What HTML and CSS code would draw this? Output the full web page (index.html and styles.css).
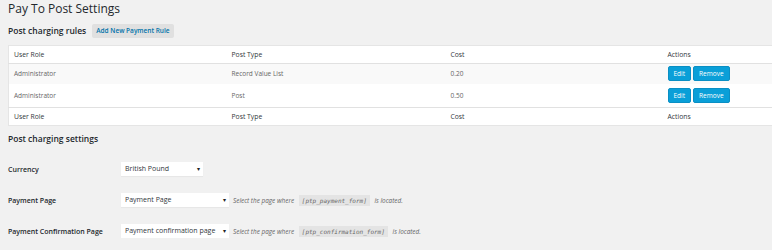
FILE: index.html
```html
<!DOCTYPE html>
<html lang="en">
<head>
    <meta charset="UTF-8">
    <title>Pay To Post Settings</title>
    <link rel="stylesheet" href="styles.css">
</head>
<body>
    <div class="wrap">
        <h1 class="page-title">Pay To Post Settings</h1>

        <div class="section-head">
            <h2>Post charging rules</h2>
            <a href="#" class="add-button">Add New Payment Rule</a>
        </div>

        <table class="rules-table">
            <colgroup>
                <col class="col-role">
                <col class="col-type">
                <col class="col-cost">
                <col>
            </colgroup>
            <thead>
                <tr>
                    <th>User Role</th>
                    <th>Post Type</th>
                    <th>Cost</th>
                    <th>Actions</th>
                </tr>
            </thead>
            <tbody>
                <tr class="alt">
                    <td>Administrator</td>
                    <td>Record Value List</td>
                    <td>0.20</td>
                    <td><a href="#" class="btn">Edit</a><a href="#" class="btn">Remove</a></td>
                </tr>
                <tr>
                    <td>Administrator</td>
                    <td>Post</td>
                    <td>0.50</td>
                    <td><a href="#" class="btn">Edit</a><a href="#" class="btn">Remove</a></td>
                </tr>
            </tbody>
            <tfoot>
                <tr>
                    <th>User Role</th>
                    <th>Post Type</th>
                    <th>Cost</th>
                    <th>Actions</th>
                </tr>
            </tfoot>
        </table>

        <h2 class="settings-title">Post charging settings</h2>

        <div class="form-row">
            <label class="form-label">Currency</label>
            <div class="select short">British Pound<span class="arrow">&#9662;</span></div>
        </div>

        <div class="form-row">
            <label class="form-label">Payment Page</label>
            <div class="select">Payment Page<span class="arrow">&#9662;</span></div>
            <p class="description">Select the page where <code>[ptp_payment_form]</code> is located.</p>
        </div>

        <div class="form-row">
            <label class="form-label">Payment Confirmation Page</label>
            <div class="select">Payment confirmation page<span class="arrow">&#9662;</span></div>
            <p class="description">Select the page where <code>[ptp_confirmation_form]</code> is located.</p>
        </div>
    </div>
</body>
</html>
```

FILE: styles.css
```css
/* Basic reset */
* {
    margin: 0;
    padding: 0;
    box-sizing: border-box;
}
body {
    font-family: 'Open Sans', sans-serif;
    background-color: #f1f1f1;
    color: #444;
}
.wrap {
    padding-left: 8px;
}
/* Headings */
.page-title {
    font-size: 12px;
    font-weight: 400;
    color: #23282d;
    line-height: 18px;
}
.section-head {
    display: flex;
    align-items: center;
    gap: 6px;
    margin-top: 5px;
    height: 15px;
}
.section-head h2,
.settings-title {
    font-size: 8.5px;
    font-weight: 600;
    color: #23282d;
}
.add-button {
    background-color: #e0e0e0;
    color: #0073aa;
    font-size: 6.5px;
    font-weight: 600;
    text-decoration: none;
    padding: 3px 4px;
    border-radius: 2px;
    line-height: 8px;
}
/* Rules table */
.rules-table {
    margin-top: 7px;
    width: 100%;
    border-collapse: collapse;
    table-layout: fixed;
    background-color: #fff;
    border: 1px solid #e5e5e5;
    border-right: none;
}
.col-role { width: 218px; }
.col-type { width: 219px; }
.col-cost { width: 217px; }
.rules-table th {
    text-align: left;
    font-weight: 400;
    font-size: 6.8px;
    color: #32373c;
    padding: 0 5px;
}
.rules-table thead th {
    height: 18px;
    border-bottom: 1px solid #e1e1e1;
}
.rules-table tfoot th {
    height: 18px;
    border-top: 1px solid #e1e1e1;
}
.rules-table td {
    font-size: 6.5px;
    color: #666;
    padding: 0 5px;
    height: 20px;
    vertical-align: middle;
}
.rules-table tbody tr:last-child td {
    height: 24px;
}
.rules-table tr.alt td {
    background-color: #f9f9f9;
}
.btn {
    display: inline-block;
    background-color: #0a9fd8;
    color: #fff;
    font-size: 6.5px;
    text-decoration: none;
    padding: 3px 5px;
    border-radius: 2px;
    margin-right: 2px;
    line-height: 7px;
    border: 1px solid #0a8fc4;
}
/* Settings form */
.settings-title {
    margin-top: 7px;
    line-height: 12px;
}
.form-row {
    display: flex;
    align-items: center;
    height: 14px;
    margin-top: 17px;
}
.form-label {
    width: 113px;
    font-size: 7px;
    font-weight: 600;
    color: #23282d;
}
.select {
    position: relative;
    width: 108px;
    height: 14px;
    background-color: #fff;
    font-size: 7px;
    color: #32373c;
    padding: 0 4px;
    line-height: 14px;
    box-shadow: 0 1px 1px rgba(0, 0, 0, 0.04);
}
.select.short {
    width: 82px;
}
.arrow {
    position: absolute;
    right: 3px;
    top: 0;
    font-size: 6px;
    color: #222;
}
.description {
    margin-left: 4px;
    font-size: 6.4px;
    font-style: italic;
    color: #666;
}
.description code {
    font-family: 'DejaVu Sans Mono', monospace;
    font-size: 6px;
    font-style: italic;
    background-color: #e4e4e4;
    padding: 2px 3px;
    margin: 0 3px;
}
```
